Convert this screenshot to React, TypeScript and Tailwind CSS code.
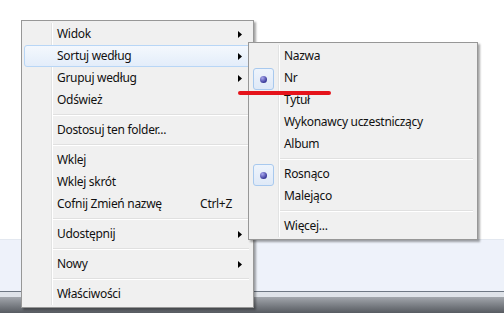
import React from 'react';

type Entry =
    | { kind: 'item'; label: string; arrow?: boolean; shortcut?: string; active?: boolean; radio?: boolean }
    | { kind: 'sep' };

const mainMenu: Entry[] = [
    { kind: 'item', label: 'Widok', arrow: true },
    { kind: 'item', label: 'Sortuj według', arrow: true, active: true },
    { kind: 'item', label: 'Grupuj według', arrow: true },
    { kind: 'item', label: 'Odśwież' },
    { kind: 'sep' },
    { kind: 'item', label: 'Dostosuj ten folder...' },
    { kind: 'sep' },
    { kind: 'item', label: 'Wklej' },
    { kind: 'item', label: 'Wklej skrót' },
    { kind: 'item', label: 'Cofnij Zmień nazwę', shortcut: 'Ctrl+Z' },
    { kind: 'sep' },
    { kind: 'item', label: 'Udostępnij', arrow: true },
    { kind: 'sep' },
    { kind: 'item', label: 'Nowy', arrow: true },
    { kind: 'sep' },
    { kind: 'item', label: 'Właściwości' },
];

const sortMenu: Entry[] = [
    { kind: 'item', label: 'Nazwa' },
    { kind: 'item', label: 'Nr', radio: true },
    { kind: 'item', label: 'Tytuł' },
    { kind: 'item', label: 'Wykonawcy uczestniczący' },
    { kind: 'item', label: 'Album' },
    { kind: 'sep' },
    { kind: 'item', label: 'Rosnąco', radio: true },
    { kind: 'item', label: 'Malejąco' },
    { kind: 'sep' },
    { kind: 'item', label: 'Więcej...' },
];

const Arrow = () => (
    <svg width="4" height="7" viewBox="0 0 4 7" className="block">
        <path d="M0 0 L4 3.5 L0 7 Z" fill="#000" />
    </svg>
);

// radio bullet in its light blue box, as in the Win7 menu
const RadioMark = () => (
    <div className="absolute left-[1px] top-0 w-[21px] h-[22px] rounded-[3px] border border-[#a8c9ee] bg-gradient-to-b from-[#eef4fc] to-[#dfe9f7] flex items-center justify-center">
        <div className="w-[7px] h-[7px] rounded-full bg-[radial-gradient(circle_at_35%_30%,#a9a9f0,#3a3a9a_70%,#22226a)]" />
    </div>
);

const MenuList: React.FC<{ entries: Entry[] }> = ({ entries }) => (
    <div className="flex flex-col">
        {entries.map((e, i) =>
            e.kind === 'sep' ? (
                <div key={i} className="h-[8px] flex flex-col justify-center ml-[28px] mr-[2px]">
                    <div className="h-px bg-[#e0e0e0]" />
                    <div className="h-px bg-white" />
                </div>
            ) : (
                <div
                    key={i}
                    className={`relative h-[22px] flex items-center pl-[32px] pr-[8px] rounded-[3px] border ${
                        e.active
                            ? 'border-[#b8d6f6] bg-gradient-to-b from-[#f4f8fd] to-[#e3edfa]'
                            : 'border-transparent'
                    }`}
                >
                    {e.radio && <RadioMark />}
                    <span className="flex-1 whitespace-nowrap">{e.label}</span>
                    {e.shortcut && <span className="mr-[10px]">{e.shortcut}</span>}
                    {e.arrow && <Arrow />}
                </div>
            )
        )}
    </div>
);

const Menu: React.FC<{ entries: Entry[]; className: string; gutter: number }> = ({ entries, className, gutter }) => (
    <div
        className={`absolute border border-[#979797] bg-[#f0f0f0] p-[2px] shadow-[2px_2px_2px_rgba(0,0,0,0.35)] ${className}`}
    >
        <div className="absolute top-[2px] bottom-[2px] w-[2px] flex" style={{ left: gutter }}>
            <div className="w-px bg-[#e2e3e3]" />
            <div className="w-px bg-white" />
        </div>
        <MenuList entries={entries} />
    </div>
);

export default function App() {
    return (
        <div className="relative w-[504px] h-[313px] overflow-hidden font-['Noto_Sans','Open_Sans',sans-serif] text-[12px] tracking-[-0.3px] text-[#111] leading-none">
            <div className="flex flex-col h-full">
                <div className="h-[240px] bg-white border-b border-[#e3e8f0]" />
                <div className="flex-1 bg-[#eef2fa]" />
                <div className="h-px bg-[#6f7884]" />
                <div className="h-[5px] bg-[#dfe3e9]" />
                <div className="h-[16px] bg-gradient-to-b from-[#a3a7ad] to-[#575b61]" />
            </div>

            <Menu entries={mainMenu} className="left-[21px] top-[20px] w-[233px]" gutter={29} />
            <Menu entries={sortMenu} className="left-[248px] top-[42px] w-[230px]" gutter={29} />

            <div className="absolute left-[238px] top-[91px] w-[93px] h-[4px] rounded-full bg-[#e5131b]" />
        </div>
    );
}
